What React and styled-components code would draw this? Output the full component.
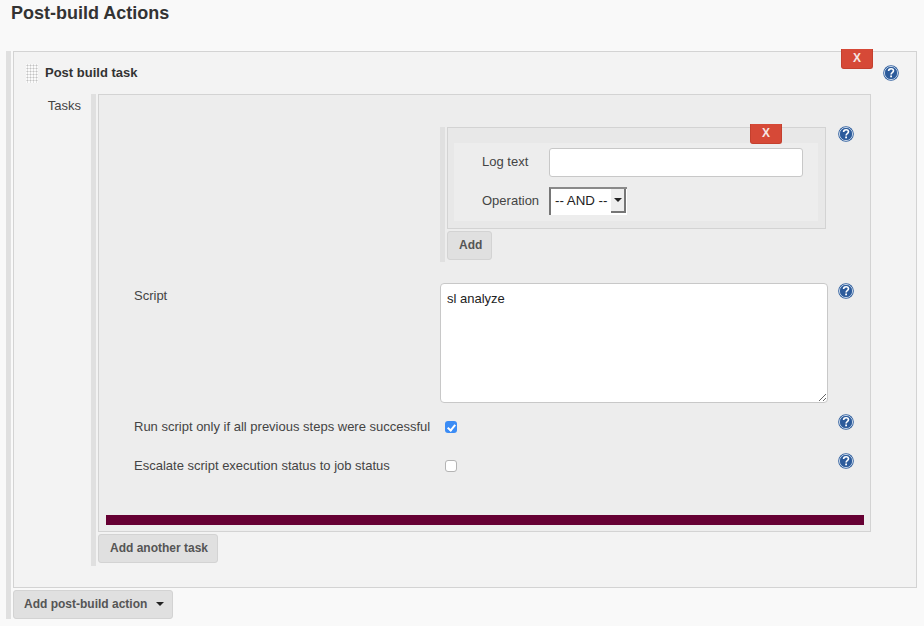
import React from "react";
import styled, { createGlobalStyle } from "styled-components";

const Global = createGlobalStyle`
  html, body {
    margin: 0;
    padding: 0;
    height: 626px;
    overflow: hidden;
    background: #f9f9f9;
    color: #333;
    font-family: "Liberation Sans", Arial, sans-serif;
    font-size: 13px;
  }
`;

const Heading = styled.h2`
  margin: 0;
  height: 51px;
  padding: 3px 0 0 11px;
  box-sizing: border-box;
  font-size: 18px;
  line-height: 21px;
  font-weight: bold;
  color: #333;
`;

const Stripe = styled.div`
  display: flex;
  flex-direction: column;
  align-items: flex-start;
  box-sizing: border-box;
  border-left: 5px solid #e0e0e0;
  padding-left: 2px;
  margin-left: ${(p) => p.$left || 0}px;
  width: ${(p) => p.$width}px;
`;

const OuterBox = styled.div`
  position: relative;
  box-sizing: border-box;
  width: 904px;
  height: 537px;
  border: 1px solid #d3d3d3;
  background: #f3f3f3;
`;

const CloseButton = styled.button`
  position: absolute;
  top: ${(p) => p.$top}px;
  right: ${(p) => p.$right}px;
  width: 32px;
  height: 20px;
  padding: 0 0 2px;
  box-sizing: border-box;
  border: 1px solid #c4402e;
  border-top: none;
  border-radius: 0 0 3px 3px;
  background: #d64937;
  color: #f6e6e3;
  font: bold 12px/16px "Liberation Sans", Arial, sans-serif;
`;

const TaskHeader = styled.div`
  display: flex;
  align-items: center;
  height: 42px;
  padding-left: 12px;
  padding-bottom: 2px;
  font-weight: bold;
  box-sizing: border-box;
`;

const Grip = styled.div`
  width: 12px;
  height: 19px;
  margin-right: 7px;
  margin-top: 2px;
  background-color: #fbfbfb;
  background-image: radial-gradient(circle at 1.5px 1.5px, #c2c2c2 0.9px, transparent 1.1px);
  background-size: 3px 3px;
`;

const HelpSlot = styled.div`
  position: absolute;
  top: ${(p) => p.$top}px;
  right: ${(p) => p.$right}px;
  line-height: 0;
`;

const TaskBody = styled.div`
  display: flex;
  align-items: flex-start;
`;

const TasksLabel = styled.div`
  width: 77px;
  padding: 4px 10px 0 0;
  box-sizing: border-box;
  text-align: right;
  line-height: 15px;
  color: #444;
`;

const TasksColumn = styled.div`
  display: flex;
  flex-direction: column;
  align-items: flex-start;
  gap: 2px;
  height: 472px;
`;

const InnerBox = styled.div`
  box-sizing: border-box;
  width: 773px;
  height: 438px;
  border: 1px solid #d3d3d3;
  background: #ededed;
  padding: 32px 6px 0 0;
  display: grid;
  grid-template-columns: 341px 388px 1fr;
  grid-template-rows: 135px 141px 39px 39px;
  position: relative;
`;

const FormLabel = styled.div`
  padding-left: 35px;
  line-height: 15px;
  padding-top: ${(p) => p.$top || 0}px;
  color: #444;
`;

const FieldCell = styled.div`
  padding-top: ${(p) => p.$top || 0}px;
`;

const HelpCell = styled.div`
  margin-top: ${(p) => p.$top || 0}px;
  padding-left: 10px;
  line-height: 0;
`;

const ScriptArea = styled.textarea`
  display: block;
  box-sizing: border-box;
  width: 388px;
  height: 120px;
  margin: 0;
  padding: 7px 6px;
  border: 1px solid #c8c8c8;
  border-radius: 4px;
  background: #fff;
  color: #222;
  font: 13px/16px "Liberation Sans", Arial, sans-serif;
  outline: none;
`;

const ConditionBox = styled.div`
  position: relative;
  box-sizing: border-box;
  width: 379px;
  height: 102px;
  border: 1px solid #d3d3d3;
  background: #e8e8e8;
  padding: 15px 7px 0 6px;
`;

const ConditionTable = styled.div`
  display: grid;
  grid-template-columns: 67px 1fr;
  grid-template-rows: 39px 39px;
  background: #ededed;
  height: 78px;
  padding-left: 28px;
  box-sizing: border-box;
`;

const CondLabel = styled.div`
  line-height: 38px;
  color: #444;
`;

const TextField = styled.input`
  display: block;
  box-sizing: border-box;
  margin-top: 5px;
  width: 254px;
  height: 29px;
  border: 1px solid #c8c8c8;
  border-radius: 3px;
  background: #fff;
  outline: none;
`;

const SelectBox = styled.div`
  display: flex;
  box-sizing: border-box;
  width: 78px;
  height: 28px;
  margin-top: 5px;
  background: #fff;
  border-left: 2px solid #767676;
  border-top: 2px solid #8a8a8a;
  color: #222;
`;

const SelectValue = styled.div`
  flex: 1;
  padding-left: 4px;
  line-height: 23px;
  font-size: 13.3px;
`;

const SelectArrow = styled.div`
  display: flex;
  align-items: center;
  justify-content: center;
  width: 15px;
  height: 24px;
  background: #eeeeee;
  border-right: 2px solid #767676;
  border-bottom: 2px solid #767676;
  box-sizing: border-box;
  margin-right: 1px;
`;

const Caret = styled.span`
  display: inline-block;
  width: 0;
  height: 0;
  border-left: 4px solid transparent;
  border-right: 4px solid transparent;
  border-top: 4px solid #222;
  margin-left: ${(p) => p.$left || 0}px;
`;

const Button = styled.button`
  display: flex;
  align-items: center;
  box-sizing: border-box;
  margin: ${(p) => p.$top || 0}px 0 0;
  height: 29px;
  width: ${(p) => p.$width}px;
  padding: 0 0 2px ${(p) => p.$pad || 10}px;
  border: 1px solid #d3d3d3;
  border-radius: 3px;
  background: #e0e0e0;
  color: #555;
  font: bold 12px "Liberation Sans", Arial, sans-serif;
`;

const CheckBox = styled.input.attrs({ type: "checkbox" })`
  appearance: none;
  position: relative;
  display: block;
  box-sizing: border-box;
  width: 12px;
  height: 12px;
  margin: 0 0 0 5px;
  border-radius: 3px;
  border: 1px solid #b4b4b4;
  background: #fff;
  &:checked {
    border: none;
    background: #3b8cf5;
  }
  &:checked::after {
    content: "";
    position: absolute;
    left: 4px;
    top: 2px;
    width: 3px;
    height: 6px;
    border: solid #fff;
    border-width: 0 2px 2px 0;
    transform: rotate(40deg);
  }
`;

const Divider = styled.div`
  position: absolute;
  left: 7px;
  right: 6px;
  top: 420px;
  height: 10px;
  background: #660033;
`;

function HelpIcon() {
  return (
    <svg width="16" height="16" viewBox="0 0 16 16">
      <circle cx="8" cy="8" r="7.8" fill="#2f5f9f" />
      <circle cx="8" cy="8" r="6.5" fill="none" stroke="#dfe8f3" strokeWidth="0.9" />
      <circle cx="8" cy="8" r="5.9" fill="#2c5b9b" />
      <path d="M5.6 6c0-1.5 1.1-2.3 2.5-2.3s2.4.9 2.4 2.1c0 1.8-2.4 1.8-2.4 3.6" fill="none" stroke="#fff" strokeWidth="1.6" />
      <rect x="7.2" y="10.5" width="1.8" height="1.8" fill="#fff" />
    </svg>
  );
}

export default function App() {
  return (
    <>
      <Global />
      <Heading>Post-build Actions</Heading>
      <Stripe $left={6} $width={916}>
        <OuterBox>
          <CloseButton $top={-3} $right={43}>X</CloseButton>
          <HelpSlot $top={13} $right={17}>
            <HelpIcon />
          </HelpSlot>
          <TaskHeader>
            <Grip />
            Post build task
          </TaskHeader>
          <TaskBody>
            <TasksLabel>Tasks</TasksLabel>
            <Stripe $width={780}>
              <TasksColumn>
                <InnerBox>
                  <div />
                  <Stripe $width={386}>
                    <ConditionBox>
                      <CloseButton $top={-4} $right={43}>X</CloseButton>
                      <ConditionTable>
                        <CondLabel>Log text</CondLabel>
                        <div>
                          <TextField />
                        </div>
                        <CondLabel>Operation</CondLabel>
                        <div>
                          <SelectBox>
                            <SelectValue>-- AND --</SelectValue>
                            <SelectArrow>
                              <Caret />
                            </SelectArrow>
                          </SelectBox>
                        </div>
                      </ConditionTable>
                    </ConditionBox>
                    <Button $width={45} $top={2} $pad={11}>Add</Button>
                  </Stripe>
                  <HelpCell $top={-1}>
                    <HelpIcon />
                  </HelpCell>

                  <FormLabel $top={26}>Script</FormLabel>
                  <FieldCell $top={21}>
                    <ScriptArea defaultValue="sl analyze" />
                  </FieldCell>
                  <HelpCell $top={21}>
                    <HelpIcon />
                  </HelpCell>

                  <FormLabel $top={16}>Run script only if all previous steps were successful</FormLabel>
                  <FieldCell $top={18}>
                    <CheckBox defaultChecked />
                  </FieldCell>
                  <HelpCell $top={11}>
                    <HelpIcon />
                  </HelpCell>

                  <FormLabel $top={16}>Escalate script execution status to job status</FormLabel>
                  <FieldCell $top={18}>
                    <CheckBox />
                  </FieldCell>
                  <HelpCell $top={11}>
                    <HelpIcon />
                  </HelpCell>

                  <Divider />
                </InnerBox>
                <Button $width={120} $pad={11}>Add another task</Button>
              </TasksColumn>
            </Stripe>
          </TaskBody>
        </OuterBox>
        <Button $width={160} $top={2}>
          Add post-build action
          <Caret $left={9} />
        </Button>
      </Stripe>
    </>
  );
}
